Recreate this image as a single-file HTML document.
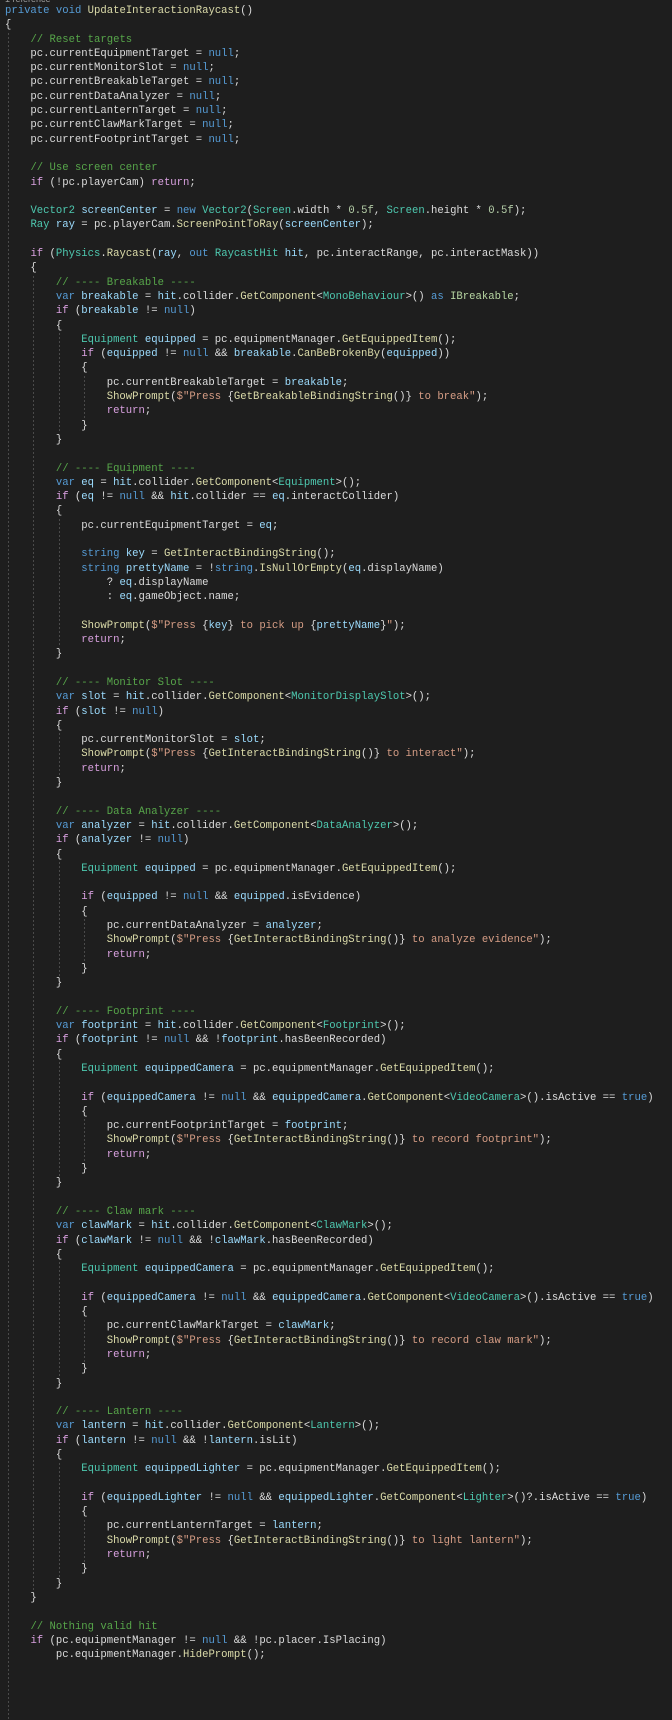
<!DOCTYPE html>
<html><head><meta charset="utf-8"><style>
html,body{margin:0;padding:0;background:#1e1e1e;width:672px;height:1663px;overflow:hidden}
#c{position:absolute;left:5px;top:4px;font-family:"Liberation Mono",monospace;font-size:10.6px;line-height:14.3px;color:#dcdcdc;white-space:pre}
.k{color:#569cd6}.c{color:#d8a0df}.m{color:#57a64a}.t{color:#4ec9b0}.f{color:#dcdcaa}.v{color:#9cdcfe}.s{color:#d69d85}.n{color:#b5cea8}.i{color:#b8d7a3}
.g{position:absolute;width:1px;background:repeating-linear-gradient(#4a4a4a 0 2px,transparent 2px 4px)}
#r{position:absolute;left:5px;top:-6px;font-family:"Liberation Sans",sans-serif;font-size:9px;color:#9a9a9a}
</style></head><body>
<div id="r">1 reference</div>
<div id="gs"></div>
<div id="c"><span class="k">private</span> <span class="k">void</span> <span class="f">UpdateInteractionRaycast</span>()
{
    <span class="m">// Reset targets</span>
    pc.currentEquipmentTarget = <span class="k">null</span>;
    pc.currentMonitorSlot = <span class="k">null</span>;
    pc.currentBreakableTarget = <span class="k">null</span>;
    pc.currentDataAnalyzer = <span class="k">null</span>;
    pc.currentLanternTarget = <span class="k">null</span>;
    pc.currentClawMarkTarget = <span class="k">null</span>;
    pc.currentFootprintTarget = <span class="k">null</span>;

    <span class="m">// Use screen center</span>
    <span class="c">if</span> (!pc.playerCam) <span class="c">return</span>;

    <span class="t">Vector2</span> <span class="v">screenCenter</span> = <span class="k">new</span> <span class="t">Vector2</span>(<span class="t">Screen</span>.width * <span class="n">0.5f</span>, <span class="t">Screen</span>.height * <span class="n">0.5f</span>);
    <span class="t">Ray</span> <span class="v">ray</span> = pc.playerCam.<span class="f">ScreenPointToRay</span>(<span class="v">screenCenter</span>);

    <span class="c">if</span> (<span class="t">Physics</span>.<span class="f">Raycast</span>(<span class="v">ray</span>, <span class="k">out</span> <span class="t">RaycastHit</span> <span class="v">hit</span>, pc.interactRange, pc.interactMask))
    {
        <span class="m">// ---- Breakable ----</span>
        <span class="k">var</span> <span class="v">breakable</span> = <span class="v">hit</span>.collider.<span class="f">GetComponent</span>&lt;<span class="t">MonoBehaviour</span>&gt;() <span class="k">as</span> <span class="i">IBreakable</span>;
        <span class="c">if</span> (<span class="v">breakable</span> != <span class="k">null</span>)
        {
            <span class="t">Equipment</span> <span class="v">equipped</span> = pc.equipmentManager.<span class="f">GetEquippedItem</span>();
            <span class="c">if</span> (<span class="v">equipped</span> != <span class="k">null</span> &amp;&amp; <span class="v">breakable</span>.<span class="f">CanBeBrokenBy</span>(<span class="v">equipped</span>))
            {
                pc.currentBreakableTarget = <span class="v">breakable</span>;
                <span class="f">ShowPrompt</span>(<span class="s">$"Press </span>{<span class="f">GetBreakableBindingString</span>()}<span class="s"> to break"</span>);
                <span class="c">return</span>;
            }
        }

        <span class="m">// ---- Equipment ----</span>
        <span class="k">var</span> <span class="v">eq</span> = <span class="v">hit</span>.collider.<span class="f">GetComponent</span>&lt;<span class="t">Equipment</span>&gt;();
        <span class="c">if</span> (<span class="v">eq</span> != <span class="k">null</span> &amp;&amp; <span class="v">hit</span>.collider == <span class="v">eq</span>.interactCollider)
        {
            pc.currentEquipmentTarget = <span class="v">eq</span>;

            <span class="k">string</span> <span class="v">key</span> = <span class="f">GetInteractBindingString</span>();
            <span class="k">string</span> <span class="v">prettyName</span> = !<span class="k">string</span>.<span class="f">IsNullOrEmpty</span>(<span class="v">eq</span>.displayName)
                ? <span class="v">eq</span>.displayName
                : <span class="v">eq</span>.gameObject.name;

            <span class="f">ShowPrompt</span>(<span class="s">$"Press </span>{<span class="v">key</span>}<span class="s"> to pick up </span>{<span class="v">prettyName</span>}<span class="s">"</span>);
            <span class="c">return</span>;
        }

        <span class="m">// ---- Monitor Slot ----</span>
        <span class="k">var</span> <span class="v">slot</span> = <span class="v">hit</span>.collider.<span class="f">GetComponent</span>&lt;<span class="t">MonitorDisplaySlot</span>&gt;();
        <span class="c">if</span> (<span class="v">slot</span> != <span class="k">null</span>)
        {
            pc.currentMonitorSlot = <span class="v">slot</span>;
            <span class="f">ShowPrompt</span>(<span class="s">$"Press </span>{<span class="f">GetInteractBindingString</span>()}<span class="s"> to interact"</span>);
            <span class="c">return</span>;
        }

        <span class="m">// ---- Data Analyzer ----</span>
        <span class="k">var</span> <span class="v">analyzer</span> = <span class="v">hit</span>.collider.<span class="f">GetComponent</span>&lt;<span class="t">DataAnalyzer</span>&gt;();
        <span class="c">if</span> (<span class="v">analyzer</span> != <span class="k">null</span>)
        {
            <span class="t">Equipment</span> <span class="v">equipped</span> = pc.equipmentManager.<span class="f">GetEquippedItem</span>();

            <span class="c">if</span> (<span class="v">equipped</span> != <span class="k">null</span> &amp;&amp; <span class="v">equipped</span>.isEvidence)
            {
                pc.currentDataAnalyzer = <span class="v">analyzer</span>;
                <span class="f">ShowPrompt</span>(<span class="s">$"Press </span>{<span class="f">GetInteractBindingString</span>()}<span class="s"> to analyze evidence"</span>);
                <span class="c">return</span>;
            }
        }

        <span class="m">// ---- Footprint ----</span>
        <span class="k">var</span> <span class="v">footprint</span> = <span class="v">hit</span>.collider.<span class="f">GetComponent</span>&lt;<span class="t">Footprint</span>&gt;();
        <span class="c">if</span> (<span class="v">footprint</span> != <span class="k">null</span> &amp;&amp; !<span class="v">footprint</span>.hasBeenRecorded)
        {
            <span class="t">Equipment</span> <span class="v">equippedCamera</span> = pc.equipmentManager.<span class="f">GetEquippedItem</span>();

            <span class="c">if</span> (<span class="v">equippedCamera</span> != <span class="k">null</span> &amp;&amp; <span class="v">equippedCamera</span>.<span class="f">GetComponent</span>&lt;<span class="t">VideoCamera</span>&gt;().isActive == <span class="k">true</span>)
            {
                pc.currentFootprintTarget = <span class="v">footprint</span>;
                <span class="f">ShowPrompt</span>(<span class="s">$"Press </span>{<span class="f">GetInteractBindingString</span>()}<span class="s"> to record footprint"</span>);
                <span class="c">return</span>;
            }
        }

        <span class="m">// ---- Claw mark ----</span>
        <span class="k">var</span> <span class="v">clawMark</span> = <span class="v">hit</span>.collider.<span class="f">GetComponent</span>&lt;<span class="t">ClawMark</span>&gt;();
        <span class="c">if</span> (<span class="v">clawMark</span> != <span class="k">null</span> &amp;&amp; !<span class="v">clawMark</span>.hasBeenRecorded)
        {
            <span class="t">Equipment</span> <span class="v">equippedCamera</span> = pc.equipmentManager.<span class="f">GetEquippedItem</span>();

            <span class="c">if</span> (<span class="v">equippedCamera</span> != <span class="k">null</span> &amp;&amp; <span class="v">equippedCamera</span>.<span class="f">GetComponent</span>&lt;<span class="t">VideoCamera</span>&gt;().isActive == <span class="k">true</span>)
            {
                pc.currentClawMarkTarget = <span class="v">clawMark</span>;
                <span class="f">ShowPrompt</span>(<span class="s">$"Press </span>{<span class="f">GetInteractBindingString</span>()}<span class="s"> to record claw mark"</span>);
                <span class="c">return</span>;
            }
        }

        <span class="m">// ---- Lantern ----</span>
        <span class="k">var</span> <span class="v">lantern</span> = <span class="v">hit</span>.collider.<span class="f">GetComponent</span>&lt;<span class="t">Lantern</span>&gt;();
        <span class="c">if</span> (<span class="v">lantern</span> != <span class="k">null</span> &amp;&amp; !<span class="v">lantern</span>.isLit)
        {
            <span class="t">Equipment</span> <span class="v">equippedLighter</span> = pc.equipmentManager.<span class="f">GetEquippedItem</span>();

            <span class="c">if</span> (<span class="v">equippedLighter</span> != <span class="k">null</span> &amp;&amp; <span class="v">equippedLighter</span>.<span class="f">GetComponent</span>&lt;<span class="t">Lighter</span>&gt;()?.isActive == <span class="k">true</span>)
            {
                pc.currentLanternTarget = <span class="v">lantern</span>;
                <span class="f">ShowPrompt</span>(<span class="s">$"Press </span>{<span class="f">GetInteractBindingString</span>()}<span class="s"> to light lantern"</span>);
                <span class="c">return</span>;
            }
        }
    }

    <span class="m">// Nothing valid hit</span>
    <span class="c">if</span> (pc.equipmentManager != <span class="k">null</span> &amp;&amp; !pc.placer.IsPlacing)
        pc.equipmentManager.<span class="f">HidePrompt</span>();
</div>
<script>
var blocks=[[0,3,120],[4,20,111],[8,24,30],[12,27,29],[8,37,45],[8,52,54],[8,61,68],[12,65,67],[8,75,82],[12,79,81],[8,89,96],[12,93,95],[8,103,110],[12,107,109]];
var h='';
blocks.forEach(function(b){var x=5+b[0]*6.36+3;var t=4+(b[1]-1)*14.3;var hh=(b[2]-b[1]+1)*14.3;h+='<div class="g" style="left:'+x.toFixed(1)+'px;top:'+t.toFixed(1)+'px;height:'+hh.toFixed(1)+'px"></div>';});
document.getElementById('gs').innerHTML=h;
</script>
</body></html>
